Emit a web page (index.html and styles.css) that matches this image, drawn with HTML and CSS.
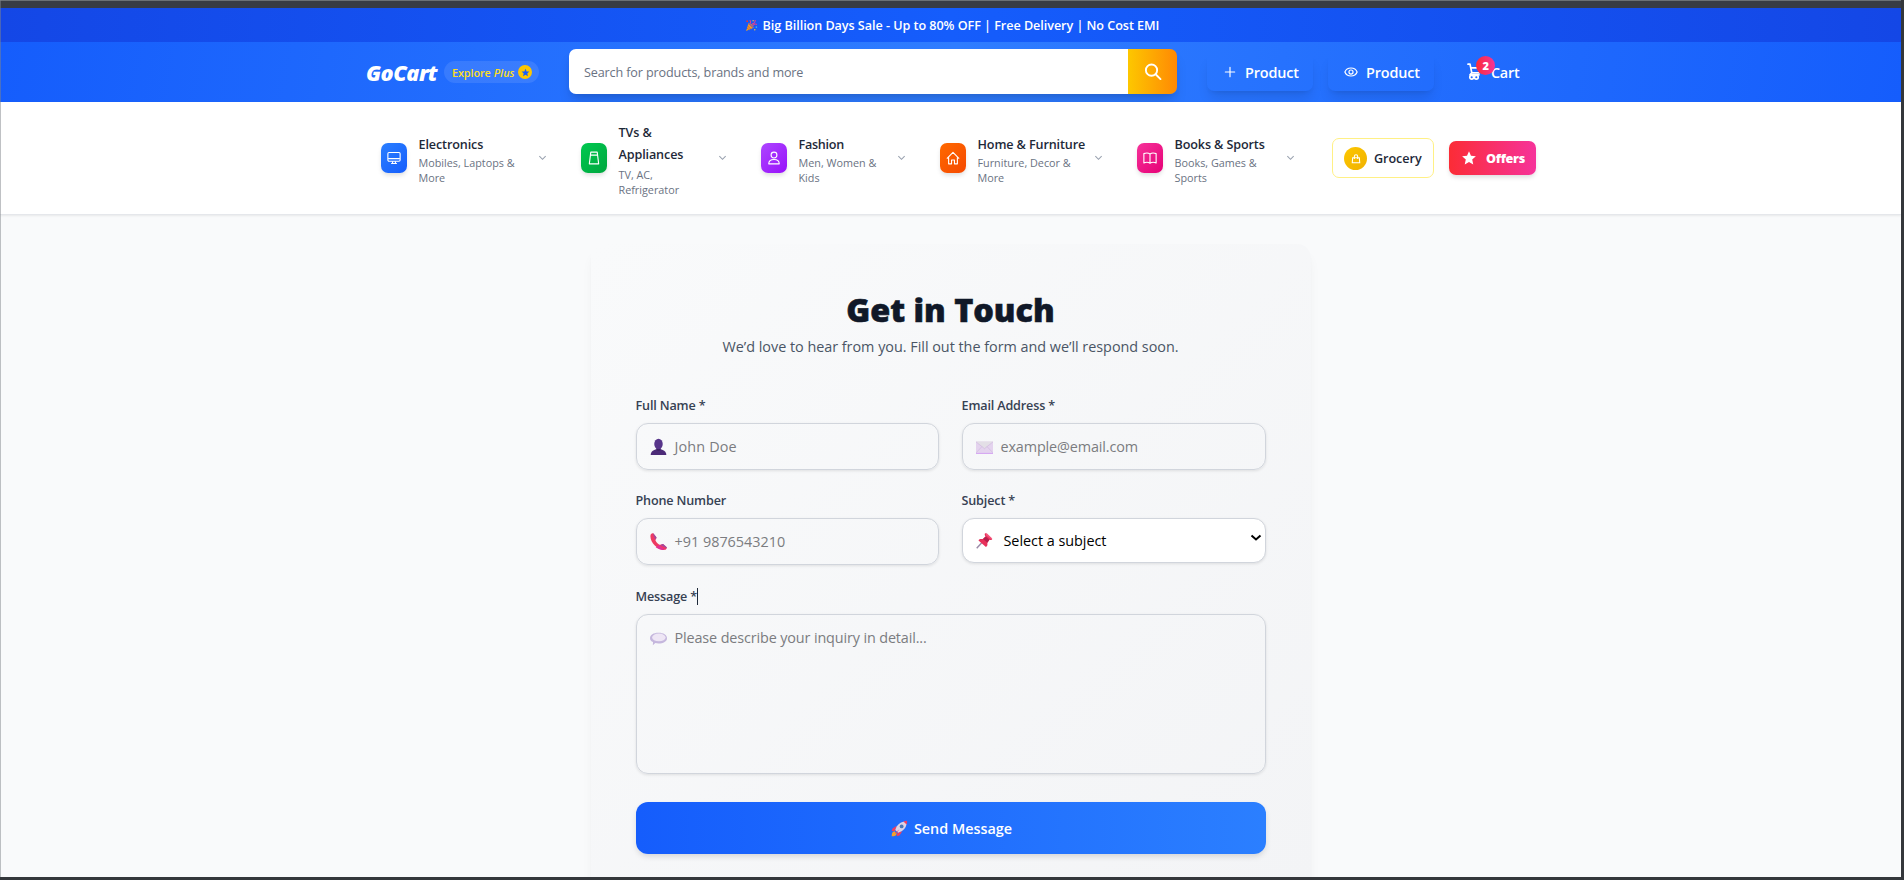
FILE: index.html
```html
<!DOCTYPE html>
<html lang="en">
<head>
<meta charset="utf-8">
<title>GoCart - Contact</title>
<link rel="stylesheet" href="styles.css">
</head>
<body>
<div class="frame-top"></div>
<div class="banner">
  <svg class="popper" viewBox="0 0 24 24"><path d="M2 22 7 7c4 1 8 5 9 9z" fill="#f0a020"/><path d="M5 13l6 6M4 17l4 3" stroke="#c4574a" stroke-width="1.500"/><path d="M7 8l8 8" stroke="#7c4dbd" stroke-width="2"/><path d="M10 8c1-3 0-5-1-6M15 12c2-3 5-3 7-2M13 9c3 0 6-3 6-7" stroke="#e83e8c" stroke-width="2" fill="none"/><circle cx="4" cy="4" r="1.600" fill="#f8312f"/><circle cx="15" cy="3" r="1.300" fill="#ffd02e"/><circle cx="21" cy="15" r="1.500" fill="#3bb2f0"/><circle cx="18" cy="20" r="1.400" fill="#f8c12f"/></svg>
  <span>Big Billion Days Sale - Up to 80% OFF | Free Delivery | No Cost EMI</span>
</div>
<header class="header">
  <div class="container head-row">
    <div class="logo">GoCart</div>
    <div class="plus-pill"><span class="explore">Explore</span><em>Plus</em><span class="plus-star"><svg viewBox="0 0 24 24"><path fill="#155dfc" d="M12 2l3 7 7.500.6-5.700 5 1.800 7.400L12 18l-6.600 4 1.800-7.400-5.700-5L9 9z"/></svg></span></div>
    <div class="search">
      <div class="search-input">Search for products, brands and more</div>
      <button class="search-btn"><svg viewBox="0 0 24 24" fill="none" stroke="#fff" stroke-width="2.500" stroke-linecap="round"><circle cx="10" cy="9.500" r="7.500"/><path d="M15.500 15l6.500 6.500"/></svg></button>
    </div>
    <a class="head-btn"><svg viewBox="0 0 24 24" fill="none" stroke="#fff" stroke-width="2" stroke-linecap="round"><path d="M12 4v16M4 12h16"/></svg><span>Product</span></a>
    <a class="head-btn view"><svg viewBox="0 0 24 24" fill="none" stroke="#fff" stroke-width="2"><path d="M1.500 12C5 2.800 19 2.800 22.500 12 19 21.200 5 21.200 1.500 12z"/><circle cx="12" cy="12" r="3.500"/></svg><span>Product</span></a>
    <a class="cart"><svg viewBox="0 0 14 17" fill="none" stroke="#fff" stroke-width="1.700" stroke-linecap="round" stroke-linejoin="round"><path d="M1 1.200h2l1.800 8.600h7.400M3.700 4.800H13M4.800 9.800 3 11.800h9"/><circle cx="4.700" cy="14.200" r="1.900"/><circle cx="9.300" cy="14.200" r="1.900"/></svg><b class="badge">2</b><span>Cart</span></a>
  </div>
</header>
<nav class="nav">
  <div class="container nav-row">
    <div class="cat"><i class="tile blue"><svg viewBox="0 0 24 24"><rect x="1.500" y="2.500" width="21" height="15" rx="2"/><path d="M2 13h20M9.500 17.500v3.500M14.500 17.500v3.500M7 21.500h10"/></svg></i><div class="cat-text"><p>Electronics</p><small>Mobiles, Laptops &amp;<br>More</small></div><svg class="chev" viewBox="0 0 10 6"><path d="M1.500 1 5 4.500 8.500 1"/></svg></div>
    <div class="cat tall"><i class="tile green"><svg viewBox="0 0 24 24"><path d="M6.500 2h11L20 22H4zM6.500 7h11"/></svg></i><div class="cat-text"><p>TVs &amp;<br>Appliances</p><small>TV, AC,<br>Refrigerator</small></div><svg class="chev" viewBox="0 0 10 6"><path d="M1.500 1 5 4.500 8.500 1"/></svg></div>
    <div class="cat fashion"><i class="tile purple"><svg viewBox="0 0 24 24"><circle cx="12" cy="7" r="5"/><path d="M3 22c0-5 4-7.500 9-7.500s9 2.500 9 7.500z"/></svg></i><div class="cat-text"><p>Fashion</p><small>Men, Women &amp;<br>Kids</small></div><svg class="chev" viewBox="0 0 10 6"><path d="M1.500 1 5 4.500 8.500 1"/></svg></div>
    <div class="cat"><i class="tile orange"><svg viewBox="0 0 24 24"><path d="M1.500 13 12 2.500 22.500 13M4.500 11v11h5v-6.500h5V22h5V11"/></svg></i><div class="cat-text"><p>Home &amp; Furniture</p><small>Furniture, Decor &amp;<br>More</small></div><svg class="chev" viewBox="0 0 10 6"><path d="M1.500 1 5 4.500 8.500 1"/></svg></div>
    <div class="cat last"><i class="tile pink"><svg viewBox="0 0 24 24"><path d="M12 5C9 3 5 3 1.500 4.500v16C5 19 9 19 12 21c3-2 7-2 10.500-.5v-16C19 3 15 3 12 5zv16"/></svg></i><div class="cat-text"><p>Books &amp; Sports</p><small>Books, Games &amp;<br>Sports</small></div><svg class="chev" viewBox="0 0 10 6"><path d="M1.500 1 5 4.500 8.500 1"/></svg></div>
    <a class="grocery"><i><svg viewBox="0 0 24 24" fill="none" stroke="#fff" stroke-width="2.500"><path d="M4 10h16l1 12H3zM8 13V7a4 4 0 018 0v6"/></svg></i><span>Grocery</span></a>
    <a class="offers"><svg viewBox="0 0 24 24"><path fill="#fff" d="M12 .5l3.400 7.700 8.400.8-6.300 5.600 1.800 8.400L12 18.700 4.700 23l1.800-8.400L.2 9l8.400-.8z"/></svg><span>Offers</span></a>
  </div>
</nav>
<main class="main">
  <section class="card">
    <h1>Get in Touch</h1>
    <p class="sub">We’d love to hear from you. Fill out the form and we’ll respond soon.</p>
    <form class="form">
      <div class="field"><label>Full Name *</label>
        <div class="box"><svg class="emo" viewBox="0 0 24 24"><path d="M1 24c0-5 4-7 8-8h6c4 1 8 3 8 8z" fill="#4c2b78"/><path d="M9 13h6v4c-2 1.500-4 1.500-6 0z" fill="#39205e"/><ellipse cx="12" cy="8.500" rx="6" ry="7.500" fill="#57358a"/></svg><span class="ph name">John Doe</span></div></div>
      <div class="field"><label>Email Address *</label>
        <div class="box"><svg class="emo" viewBox="0 0 24 24"><path d="M0 5h24v17H0z" fill="#e4d3ee"/><path d="M0 5h24L12 15z" fill="#e3dfe6"/><path d="M0 5.500 12 15 24 5.500M0 21l8.500-9M24 21l-8.500-9" fill="none" stroke="#cbb5dc" stroke-width=".8"/><path d="M0 21h24v1.500H0z" fill="#d5a5f2"/></svg><span class="ph">example@email.com</span></div></div>
      <div class="field"><label>Phone Number</label>
        <div class="box"><svg class="emo" viewBox="0 0 24 24"><path d="M1 2c2-2 4-2 5 0l3 4c.500 2-2 3-1 5 1 2.500 3 4.500 5.500 5.500 2 .8 3-1.500 5-1l4 3.500c2 1.500 1.500 3-.5 4.500C12 26-2 12 1 2z" fill="#ee3a62"/><path d="M4 .800c1 0 1.500.5 2 1.200l3 4c.3 1.500-1 2.500-1.500 3.500zM18.500 15.500l4 3.500c1 .8 1.500 1.500 1 2.500l-9-4.500c1.500-.3 2.500-2 4-1.500z" fill="#a04aa0"/><path d="M13 17l8 7c-5 0-9-1-13-4z" fill="#e32f94"/></svg><span class="ph phone">+91 9876543210</span></div></div>
      <div class="field"><label>Subject *</label>
        <div class="box select"><svg class="emo" viewBox="0 0 24 24"><path d="M10 13 1 23" stroke="#9a8ba8" stroke-width="2"/><path d="M13 1.500 23 10c-1 2-2.500 1.500-4 1l-3 4c.500 3 0 5-2 6L3.500 12c1-2 3-2.500 6-2l4-3.500C12 4.500 12 3 13 1.500z" fill="#e8305a"/><path d="M13.500 6.500 19 11l-3 4-6-5z" fill="#b51f4c"/><path d="M14.500 1 23 9l-3 .5-6-5z" fill="#f4557c"/></svg><span class="value">Select a subject</span><svg class="caret" viewBox="0 0 12 8"><path d="M1.500 1.500 6 5.500l4.500-4"/></svg></div></div>
      <div class="field wide"><label>Message *<i class="cursor"></i></label>
        <div class="box area"><svg class="emo" viewBox="0 0 24 24"><path d="M12 4c7 0 12 3 12 7.500S19 19 12 19c-1.500 0-3-.2-4.500-.5L4 21.500l.3-4.500C1.500 15.700 0 13.800 0 11.500 0 7 5 4 12 4z" fill="#c5b7dd"/><ellipse cx="12.500" cy="10.500" rx="9.500" ry="5.500" fill="#eee6f5"/></svg><span class="ph">Please describe your inquiry in detail...</span></div></div>
      <button type="button" class="send"><svg viewBox="0 0 24 24"><path d="M1 23c0-4 1-7 4-7l3 3c0 3-3 4-7 4z" fill="#f5a12e"/><path d="M8 8 2 12l-1 4 5-1zM16 16l-4 6-4 1 1-5z" fill="#ef3f62"/><path d="M6 14C8 7 13 2 20 2c.8 0 2 .2 2 2 0 7-5 12-12 14z" fill="#dcd3e6"/><path d="M17.500 2c2-.8 4.500-1 5-.5s.3 3-.5 5z" fill="#ef3f62"/><circle cx="15" cy="9" r="2.700" fill="#4a78b8"/><path d="M12 13 7 19l-1 0 0-1z" fill="#ef3f62"/></svg><span>Send Message</span></button>
    </form>
  </section>
</main>
</body>
</html>
```

FILE: styles.css
```css
* { box-sizing: border-box; margin: 0; padding: 0; }
body {
  width: 1904px; height: 880px; overflow: hidden; position: relative;
  display: flex; flex-direction: column;
  border-right: 3px solid #34373b; border-bottom: 3px solid #34373b;
  background: #f9fafb;
  font-family: "Open Sans", "Noto Sans", sans-serif; font-size: 14.4px;
  white-space: nowrap;
}
body::before { content: ""; position: absolute; left: 0; top: 0; width: 1px; height: 877px; background: rgba(128, 132, 138, .5); }
svg { display: block; flex: none; }
.container { width: 1171px; margin: 0 auto; }
.frame-top { flex: none; height: 8px; background: #383c44; border-top: 1px solid #6b7075; }
.banner {
  flex: none; height: 34px; padding-left: 3px; display: flex; align-items: center; justify-content: center; gap: 5px;
  background: linear-gradient(90deg, #1447e6, #155dfc, #1447e6);
  color: #fff; font-size: 12.6px; font-weight: 600; letter-spacing: -.045px;
}
.popper { width: 13px; height: 13px; }
.header { flex: none; height: 60px; background: linear-gradient(100deg, #155dfc, #2f7dff 50%, #155dfc); color: #fff; }
.head-row { height: 60px; display: flex; align-items: center; }
.logo { width: 79px; padding-left: 1px; font-size: 21.6px; font-weight: 800; font-style: italic; letter-spacing: -.5px; }
.plus-pill { width: 95px; height: 22px; padding-left: 8px; border-radius: 11px; background: rgba(255,255,255,.1); display: flex; align-items: center; color: #ffdf20; font-size: 10.8px; font-weight: 600; }
.explore { letter-spacing: -.08px; margin-right: 3px; }
.plus-pill em { letter-spacing: .1px; }
.plus-star { margin-left: auto; margin-right: 7px; width: 14px; height: 14px; border-radius: 50%; background: #fdc700; display: grid; place-items: center; }
.plus-star svg { width: 9px; height: 9px; }
.search { width: 608px; height: 45px; margin: -1px 30px 0; display: flex; border-radius: 7px; overflow: hidden; box-shadow: 0 9px 14px -3px rgba(0,0,0,.14), 0 3px 6px -3px rgba(0,0,0,.12); }
.search-input { flex: 1; background: #fff; color: #6a7282; font-size: 12.6px; letter-spacing: -.13px; padding: 2px 0 0 15px; display: flex; align-items: center; }
.search-btn { width: 49px; border: 0; background: linear-gradient(90deg, #fdc700, #ff8904); display: grid; place-items: center; }
.search-btn svg { width: 18px; height: 18px; }
.head-btn { width: 106px; height: 38px; display: flex; align-items: center; border-radius: 7px; padding-left: 16px; font-weight: 600; letter-spacing: -.12px; box-shadow: 0 9px 13px -3px rgba(0,0,0,.11), 0 3px 5px -3px rgba(0,0,0,.1); }
.head-btn svg { width: 14px; height: 14px; margin: -1px 8px 0 0; }
.head-btn.view { margin-left: 15px; }
.cart { margin-left: 33px; display: flex; align-items: center; font-weight: 600; letter-spacing: -.25px; position: relative; }
.cart svg { width: 14px; height: 17px; margin: -2px 10px 0 0; }
.badge { position: absolute; left: 9px; top: -7px; width: 19px; height: 19px; border-radius: 50%; background: linear-gradient(90deg, #fb2c36, #f6339a); font-size: 11px; line-height: 19px; text-align: center; }
.nav { flex: none; height: 113px; background: #fff; border-bottom: 1px solid #e5e7eb; box-shadow: 0 1px 2px rgba(0,0,0,.07); }
.nav-row { height: 112px; padding-left: 16px; display: grid; grid-template-columns: 166px 146px 145px 163px 161px 102px 87px; column-gap: 34px; align-items: center; }
.cat { display: flex; align-items: center; }
.tile { width: 26px; height: 30px; border-radius: 7px; display: grid; place-items: center; margin-right: 11.5px; box-shadow: 0 3px 5px -1px rgba(0,0,0,.15); }
.tile svg { width: 14px; height: 14px; fill: none; stroke: #fff; stroke-width: 1.9; stroke-linejoin: round; }
.blue { background: linear-gradient(135deg, #2b7fff, #155dfc); }
.green { background: linear-gradient(135deg, #00c950, #00a63e); }
.purple { background: linear-gradient(135deg, #ad46ff, #9810fa); }
.orange { background: linear-gradient(135deg, #ff6900, #f54900); }
.pink { background: linear-gradient(135deg, #f6339a, #e60076); }
.cat-text { padding-top: 1px; }
.cat-text p { margin: 1px 0 -1px; font-size: 12.6px; line-height: 22px; font-weight: 600; letter-spacing: -.12px; color: #1e2939; }
.fashion p { letter-spacing: -.26px; }
.cat-text small { display: block; font-size: 10.8px; line-height: 15px; color: #6a7282; }
.tall small { margin: 2px 0 -1px; }
.chev { width: 9px; height: 6px; margin-left: auto; fill: none; stroke: #99a1af; stroke-width: 1.2; }
.last .chev { margin-right: 3px; }
.grocery { height: 40px; border: 1px solid #fff085; border-radius: 7px; display: flex; align-items: center; padding-left: 11px; font-size: 12.6px; font-weight: 600; letter-spacing: -.05px; color: #1e2939; }
.grocery i { width: 23px; height: 23px; border-radius: 50%; background: linear-gradient(135deg, #fdc700, #f0b100); display: grid; place-items: center; margin-right: 7px; }
.grocery svg { width: 10px; height: 11px; }
.grocery span { padding-top: 1px; }
.offers { height: 34px; margin-left: -19px; width: 87px; border-radius: 7px; background: linear-gradient(90deg, #fb2c36, #f6339a); color: #fff; display: flex; align-items: center; padding-left: 13px; font-size: 12.6px; font-weight: 800; letter-spacing: -.3px; box-shadow: 0 3px 5px -1px rgba(0,0,0,.15); }
.offers svg { width: 14px; height: 14px; margin-right: 10px; }
.main { flex: 1; min-height: 0; overflow: hidden; padding-top: 29px; }
.card { width: 720px; height: 640px; margin: 0 auto; padding: 45px; border-radius: 14px 14px 0 0; background: linear-gradient(to bottom right, #f9fafb, #f3f4f6); box-shadow: 0 9px 14px -3px rgba(0,0,0,.06), 0 3px 5px -2px rgba(0,0,0,.03); }
h1 { font-size: 32.4px; line-height: 40px; font-weight: 800; letter-spacing: -.02px; -webkit-text-stroke: .6px #101828; color: #101828; text-align: center; }
.sub { margin-top: 6px; line-height: 24px; font-size: 14.4px; letter-spacing: -.02px; color: #4a5565; text-align: center; }
.form { margin-top: 38px; display: grid; grid-template-columns: 303px 304px; column-gap: 23px; row-gap: 22px; }
label { display: flex; height: 18px; line-height: 18px; margin-bottom: 8px; font-size: 12.6px; font-weight: 600; letter-spacing: -.15px; color: #364153; }
.box { height: 47px; border: 1px solid #d1d5dc; border-radius: 12px; padding-left: 13px; display: flex; align-items: center; box-shadow: 0 1px 3px rgba(0,0,0,.1); font-size: 14.4px; letter-spacing: -.13px; }
.emo { width: 17px; height: 17px; margin-right: 8px; }
.ph { color: #7b7c80; }
.ph.name { letter-spacing: .15px; }
.ph.phone { letter-spacing: 0; }
.select { height: 45px; background: #fff; color: #000; letter-spacing: -.03px; }
.select .emo { margin-right: 11px; }
.caret { width: 12px; height: 8px; margin: -6px 3px 0 auto; fill: none; stroke: #000; stroke-width: 2; }
.wide { grid-column: 1 / 3; margin-top: 1px; }
.area { height: 160px; align-items: flex-start; padding-top: 13px; }
.area .emo { margin-top: 2px; }
.cursor { width: 1px; height: 17px; background: #1e2939; }
.send { grid-column: 1 / 3; margin-top: 6px; height: 52px; padding-left: 2px; border: 0; border-radius: 12px; background: linear-gradient(90deg, #155dfc, #2b7fff); color: #fff; font: 600 14.4px "Open Sans", sans-serif; display: flex; align-items: center; justify-content: center; gap: 6px; box-shadow: 0 3px 6px -1px rgba(0,0,0,.15); }
.send svg { width: 17px; height: 17px; }
```
